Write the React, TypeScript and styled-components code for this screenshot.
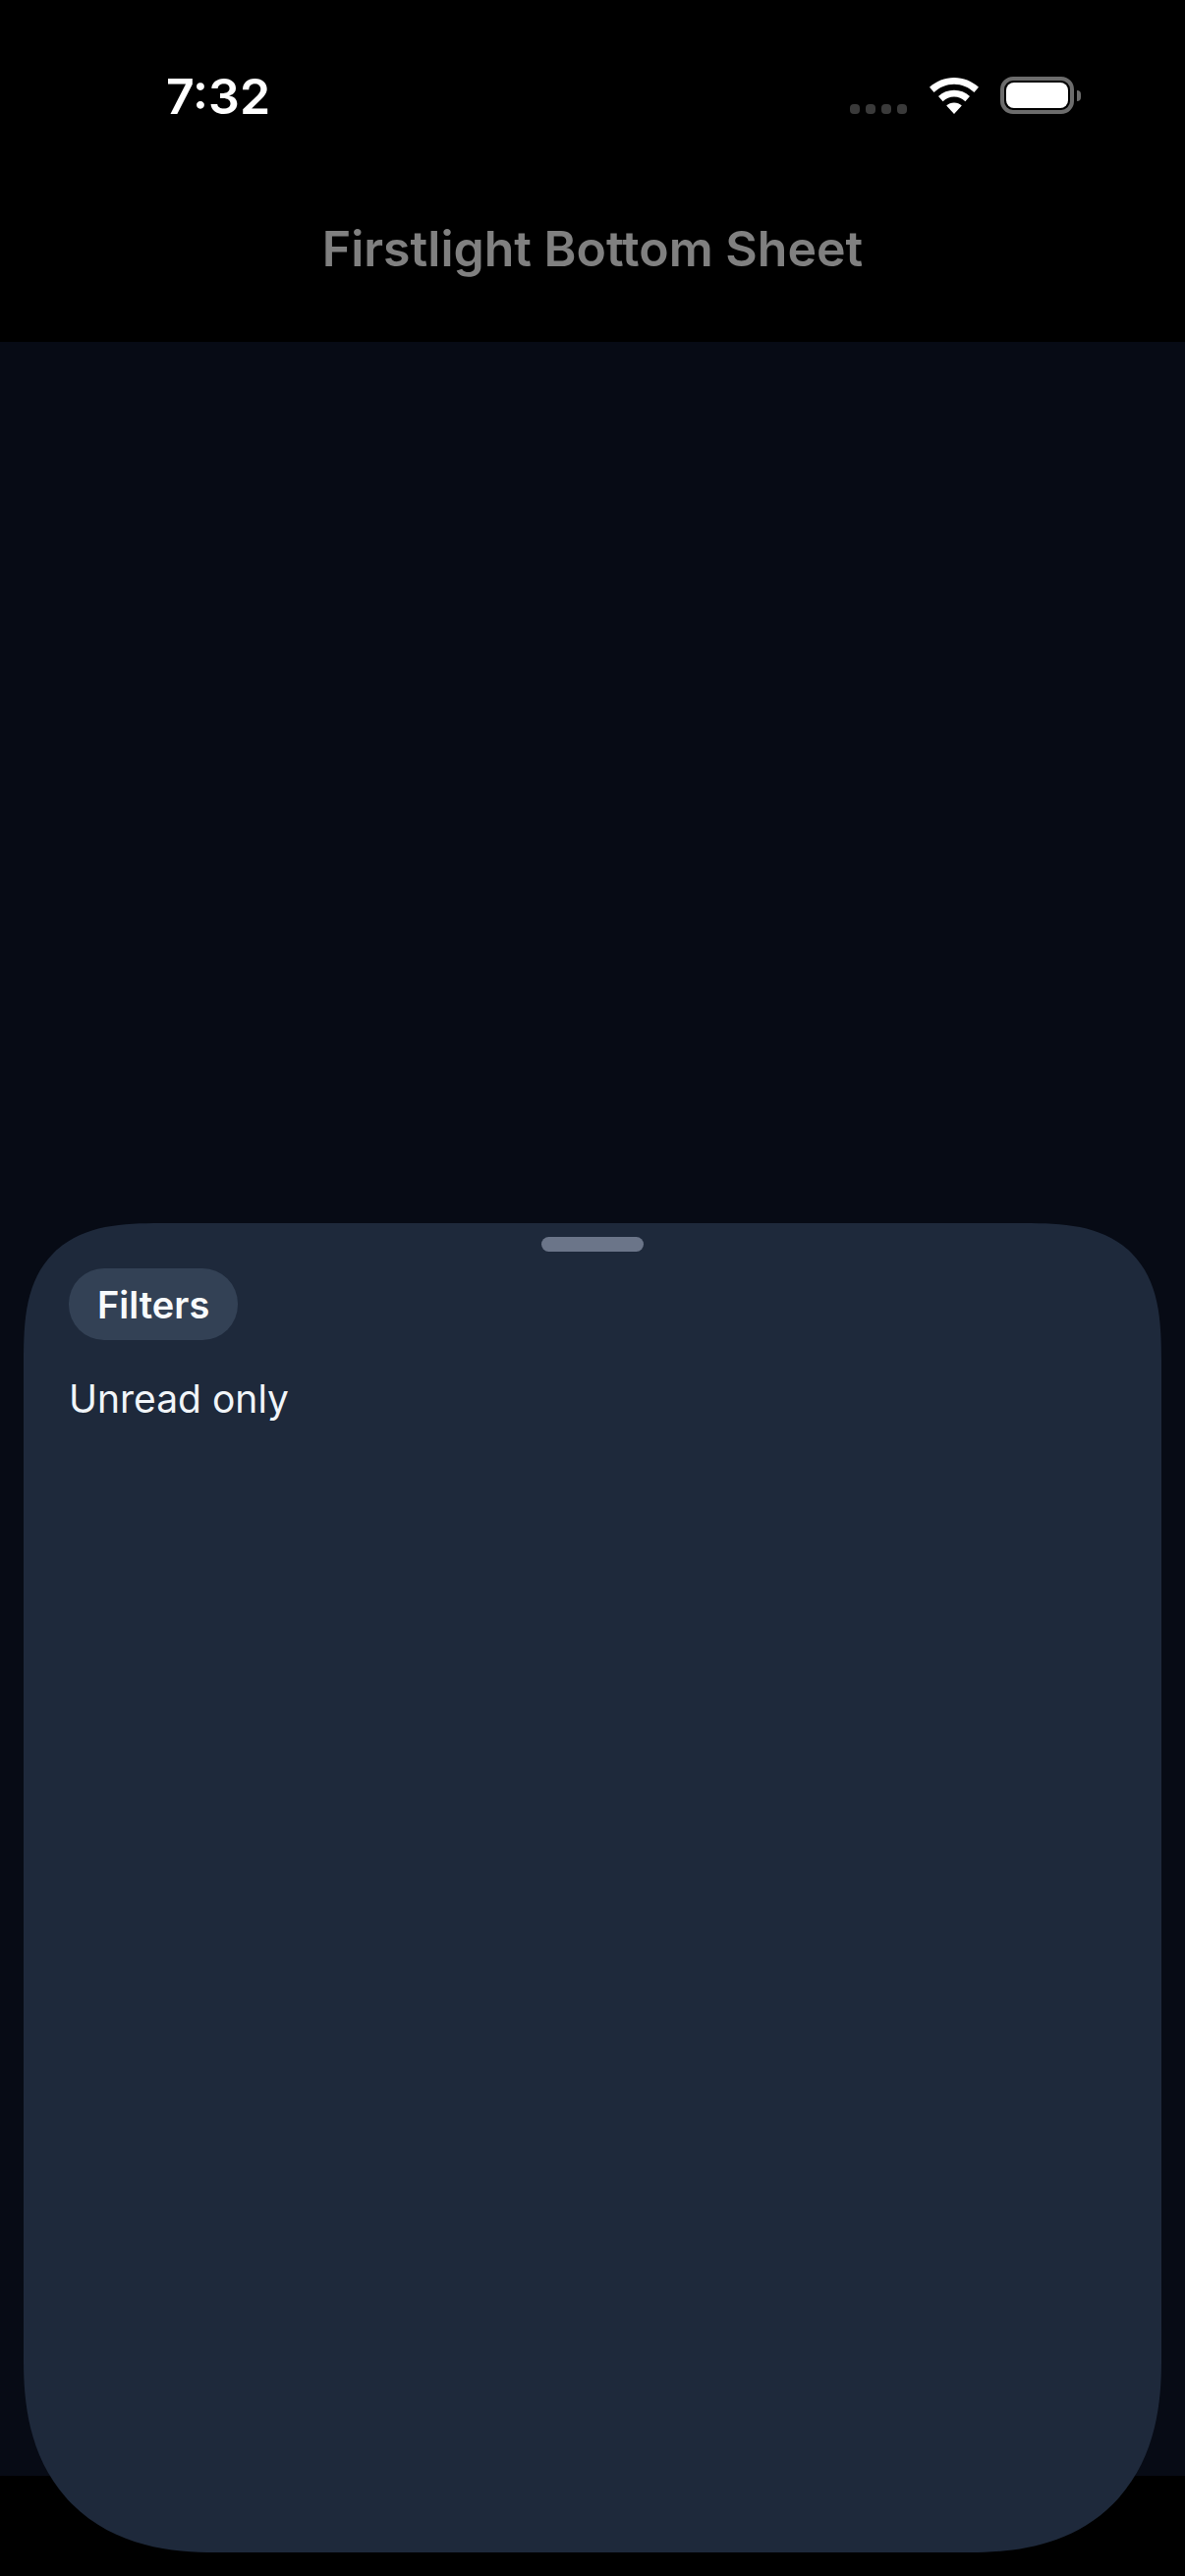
import React from "react";
import styled, { createGlobalStyle } from "styled-components";

const Global = createGlobalStyle`
  html, body { margin: 0; padding: 0; background: #000; }
  #root { width: 1206px; height: 2622px; }
`;

const Screen = styled.div`
  position: relative;
  width: 1206px;
  height: 2622px;
  background: #000;
  display: flex;
  flex-direction: column;
  overflow: hidden;
  font-family: Inter, "Liberation Sans", sans-serif;
`;

const StatusBar = styled.div`
  height: 196px;
  flex: none;
  box-sizing: border-box;
  display: flex;
  justify-content: space-between;
  align-items: flex-start;
  padding: 73px 106px 0 169px;
`;

const Clock = styled.div`
  color: #fff;
  font-size: 50px;
  font-weight: 600;
  line-height: 50px;
`;

const Indicators = styled.div`
  display: flex;
  align-items: flex-end;
  padding-top: 5px;
`;

const Dots = styled.div`
  display: flex;
  gap: 6px;
  margin-right: 23px;
`;

const Dot = styled.span`
  width: 10px;
  height: 10px;
  border-radius: 4px;
  background: #3a3a3a;
`;

const Battery = styled.div`
  position: relative;
  margin-left: 22px;
  margin-right: 7px;
  width: 75px;
  height: 38px;
  box-sizing: border-box;
  border: 4px solid #6c6c6c;
  border-radius: 13px;
  padding: 2px;
  display: flex;
`;

const BatteryLevel = styled.span`
  flex: 1;
  background: #fff;
  border-radius: 8px;
`;

const BatteryNub = styled.span`
  position: absolute;
  right: -11px;
  top: 10px;
  width: 4px;
  height: 11px;
  background: #6c6c6c;
  border-radius: 0 4px 4px 0;
`;

const TitleBar = styled.header`
  height: 152px;
  flex: none;
  box-sizing: border-box;
  padding-top: 28px;
  display: flex;
  justify-content: center;
  color: #808080;
  font-size: 50px;
  font-weight: 600;
  line-height: 58px;
`;

const Body = styled.main`
  flex: 1;
  background: #070b15;
`;

const Footer = styled.div`
  height: 102px;
  flex: none;
  background: #000;
`;

const Sheet = styled.section`
  position: absolute;
  left: 24px;
  right: 24px;
  top: 1245px;
  bottom: 24px;
  background: #1e293b;
  border-radius: 140px 140px 195px 195px;
  corner-shape: superellipse(1.5) superellipse(1.5) superellipse(1.25) superellipse(1.25);
  box-sizing: border-box;
  padding: 46px 46px 0;
`;

const Handle = styled.div`
  position: absolute;
  top: 14px;
  left: 50%;
  transform: translateX(-50%);
  width: 104px;
  height: 15px;
  border-radius: 8px;
  background: #6b7589;
`;

const Chip = styled.div`
  display: inline-flex;
  align-items: center;
  height: 73px;
  box-sizing: border-box;
  padding: 0 29px;
  border-radius: 36px;
  background: #334155;
  color: #f8fafc;
  font-size: 38px;
  font-weight: 600;
`;

const Option = styled.div`
  margin-top: 32px;
  color: #f1f5f9;
  font-size: 39px;
  line-height: 56px;
`;

const WifiIcon = () => (
  <svg width="50" height="37" viewBox="0 0 50 37">
    <path
      d="M25 0C34.5 0 43.2 3.6 50 9.8L45.4 15C39.8 9.9 32.7 6.8 25 6.8S10.2 9.9 4.6 15L0 9.8C6.8 3.6 15.5 0 25 0Z"
      fill="#fff"
    />
    <path
      d="M25 12.8C31 12.8 36.6 15 41 19L36.4 24.2C33.3 21.3 29.4 19.6 25 19.6S16.7 21.3 13.6 24.2L9 19C13.4 15 19 12.8 25 12.8Z"
      fill="#fff"
    />
    <path d="M25 25.6C28 25.6 30.7 26.7 32.8 28.6L25 37L17.2 28.6C19.3 26.7 22 25.6 25 25.6Z" fill="#fff" />
  </svg>
);

export default function App() {
  return (
    <Screen>
      <Global />
      <StatusBar>
        <Clock>7:32</Clock>
        <Indicators>
          <Dots>
            <Dot />
            <Dot />
            <Dot />
            <Dot />
          </Dots>
          <WifiIcon />
          <Battery>
            <BatteryLevel />
            <BatteryNub />
          </Battery>
        </Indicators>
      </StatusBar>
      <TitleBar>Firstlight Bottom Sheet</TitleBar>
      <Body />
      <Footer />
      <Sheet>
        <Handle />
        <Chip>Filters</Chip>
        <Option>Unread only</Option>
      </Sheet>
    </Screen>
  );
}
